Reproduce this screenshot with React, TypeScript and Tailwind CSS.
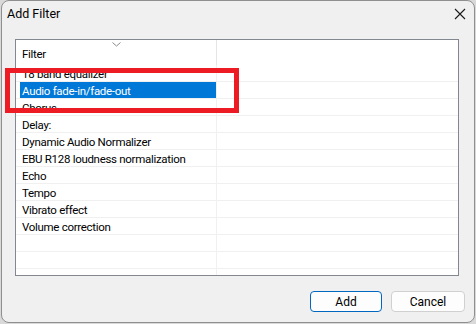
import React from 'react'

const filters = [
  '18 band equalizer',
  'Audio fade-in/fade-out',
  'Chorus',
  'Delay:',
  'Dynamic Audio Normalizer',
  'EBU R128 loudness normalization',
  'Echo',
  'Tempo',
  'Vibrato effect',
  'Volume correction',
  '',
  '',
  '',
]

const SELECTED = 1

export default function App() {
  return (
    <div
      className="w-[476px] h-[324px] bg-[#d9d9d9] text-[11.5px] tracking-[-0.3px] text-black"
      style={{ fontFamily: '"Segoe UI", Roboto, sans-serif' }}
    >
      <div className="relative ml-[1px] w-[474px] h-[323px] rounded-[8px] border border-[#8f8f8f] bg-[#f0f0f0] flex flex-col overflow-hidden">
        {/* title bar */}
        <div className="h-[38px] flex items-start justify-between pl-[5px] pr-[8px] pt-[5px]">
          <span className="leading-[16px] text-[12.5px] tracking-normal">Add Filter</span>
          <svg width="12" height="12" viewBox="0 0 12 12" className="mt-[2px]">
            <path d="M1 1 L11 11 M11 1 L1 11" stroke="#1a1a1a" strokeWidth="1.1" />
          </svg>
        </div>

        {/* list view */}
        <div className="ml-[13px] w-[444px] h-[237px] border border-[#828790] bg-white overflow-hidden">
          <div className="h-[25px] flex">
            <div className="relative w-[201px] pl-[6px] pt-[4px] flex items-center border-r border-[#e5e5e5]">
              <span>Filter</span>
              <svg width="9" height="5" viewBox="0 0 9 5" className="absolute left-[96px] top-[2px]">
                <path d="M0.5 0.5 L4.5 4 L8.5 0.5" stroke="#8a8a8a" strokeWidth="1" fill="none" />
              </svg>
            </div>
            <div className="flex-1" />
          </div>
          {filters.map((name, i) => (
            <div key={i} className="h-[17px] flex border-b border-[#f0f0f0]">
              <div className="w-[201px] pl-[4px] border-r border-[#f0f0f0]">
                <div
                  className={
                    'h-full w-[196px] pl-[2px] pt-[1px] leading-[16px] whitespace-nowrap ' +
                    (i === SELECTED ? 'bg-[#0078d7] text-white' : '')
                  }
                >
                  {name}
                </div>
              </div>
              <div className="flex-1" />
            </div>
          ))}
        </div>

        {/* buttons */}
        <div className="flex justify-end gap-[9px] pr-[9px] mt-[15px]">
          <button className="w-[72px] h-[21px] rounded-[4px] border border-[#0067c0] bg-[#fdfdfd] leading-[18px] text-[12px] tracking-normal">
            Add
          </button>
          <button className="w-[74px] h-[21px] rounded-[4px] border border-[#d0d0d0] bg-[#fdfdfd] leading-[18px] text-[12px] tracking-normal">
            Cancel
          </button>
        </div>

        {/* red annotation box */}
        <div className="absolute left-[3px] top-[67px] w-[234px] h-[45px] border-[5px] border-[#ed1c24]" />
      </div>
    </div>
  )
}
